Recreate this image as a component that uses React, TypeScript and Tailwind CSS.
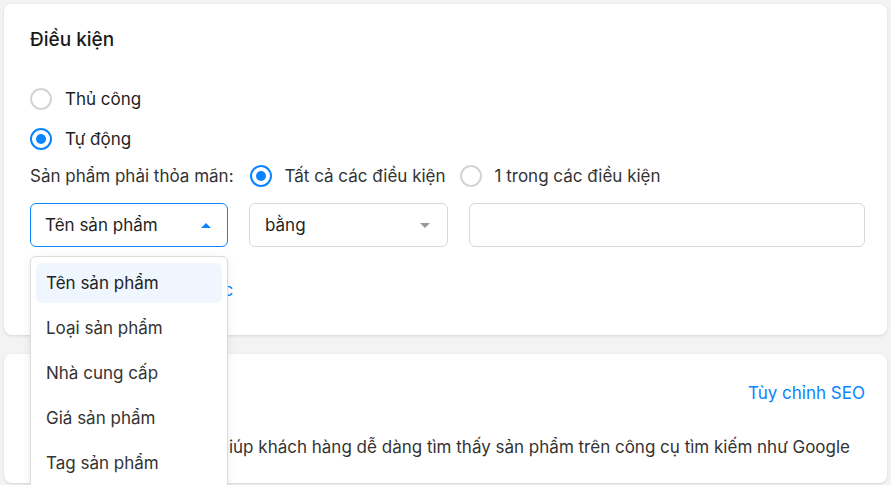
import { Plus } from 'lucide-react'

const options = ['Tên sản phẩm', 'Loại sản phẩm', 'Nhà cung cấp', 'Giá sản phẩm', 'Tag sản phẩm']

function Radio({ checked, label }: { checked?: boolean; label: string }) {
  return (
    <label className="flex h-[22px] items-center gap-[13px]">
      <span
        className={
          checked
            ? 'flex h-[22px] w-[22px] items-center justify-center rounded-full border-2 border-[#0a84ff] bg-white'
            : 'h-[22px] w-[22px] rounded-full border-2 border-[#d4d4d4] bg-white'
        }
      >
        {checked && <span className="h-[10px] w-[10px] rounded-full bg-[#0a84ff]" />}
      </span>
      <span>{label}</span>
    </label>
  )
}

export default function App() {
  return (
    <div
      className="min-h-[485px] bg-[#f3f3f3] p-[4px] text-[17px] leading-[24px] text-[#1f1f1f]"
      style={{ fontFamily: 'Inter, "Noto Sans", sans-serif' }}
    >
      {/* Conditions card */}
      <div className="relative h-[331px] rounded-lg bg-white pl-[26px] pr-[22px] pt-[26px] shadow-[0_1px_3px_rgba(0,0,0,0.12)]">
        <h2 className="text-[19px] font-medium leading-[20px] text-[#1a1a1a]">Điều kiện</h2>

        <div className="mt-[38px] flex flex-col gap-[18px]">
          <Radio label="Thủ công" />
          <Radio checked label="Tự động" />
        </div>

        <div className="mt-[14px] flex items-center text-[#333]">
          <span className="mr-[16px]">Sản phẩm phải thỏa mãn:</span>
          <div className="mr-[14px]">
            <Radio checked label="Tất cả các điều kiện" />
          </div>
          <Radio label="1 trong các điều kiện" />
        </div>

        <div className="mt-[15px] flex gap-[21px]">
          <div className="relative w-[198px]">
            <div className="flex h-[44px] items-center justify-between rounded-md border border-[#0a84ff] pl-[14px] pr-[16px]">
              <span>Tên sản phẩm</span>
              <span className="h-0 w-0 border-x-[5px] border-b-[5px] border-x-transparent border-b-[#0a84ff]" />
            </div>
            {/* open dropdown */}
            <div className="absolute left-0 top-[53px] z-10 w-[198px] rounded-md border border-[#dcdcdc] bg-white px-[5px] pt-[6px] pb-[8px] shadow-[0_2px_8px_rgba(0,0,0,0.08)]">
              {options.map((o, i) => (
                <div
                  key={o}
                  className={
                    i === 0
                      ? 'flex h-[40px] items-center rounded-md bg-[#eff6fd] px-[10px] text-[#222]'
                      : 'mt-[5px] flex h-[40px] items-center px-[10px] text-[#333]'
                  }
                >
                  {o}
                </div>
              ))}
            </div>
          </div>
          <div className="flex h-[44px] w-[199px] items-center justify-between rounded-md border border-[#d9d9d9] pl-[15px] pr-[17px]">
            <span>bằng</span>
            <span className="h-0 w-0 border-x-[5px] border-t-[5px] border-x-transparent border-t-[#999]" />
          </div>
          <div className="h-[44px] flex-1 rounded-md border border-[#d9d9d9]" />
        </div>

        <div className="mt-[31px] flex items-center gap-[6px] pl-[14px] text-[#0a84ff]">
          <Plus size={16} />
          <span>Thêm điều kiện khác</span>
        </div>
      </div>

      {/* SEO card */}
      <div className="mt-[19px] h-[129px] rounded-lg bg-white pl-[26px] pr-[22px] pt-[27px] shadow-[0_1px_3px_rgba(0,0,0,0.12)]">
        <div className="flex items-center justify-between">
          <h2 className="text-[19px] font-medium text-[#1a1a1a]">Tối ưu SEO</h2>
          <span className="text-[#0a84ff]">Tùy chỉnh SEO</span>
        </div>
        <p className="mt-[30px] whitespace-nowrap text-[#333]">
          Thiết lập tiêu đề, mô tả giúp khách hàng dễ dàng tìm thấy sản phẩm trên công cụ tìm kiếm như Google
        </p>
      </div>
    </div>
  )
}
